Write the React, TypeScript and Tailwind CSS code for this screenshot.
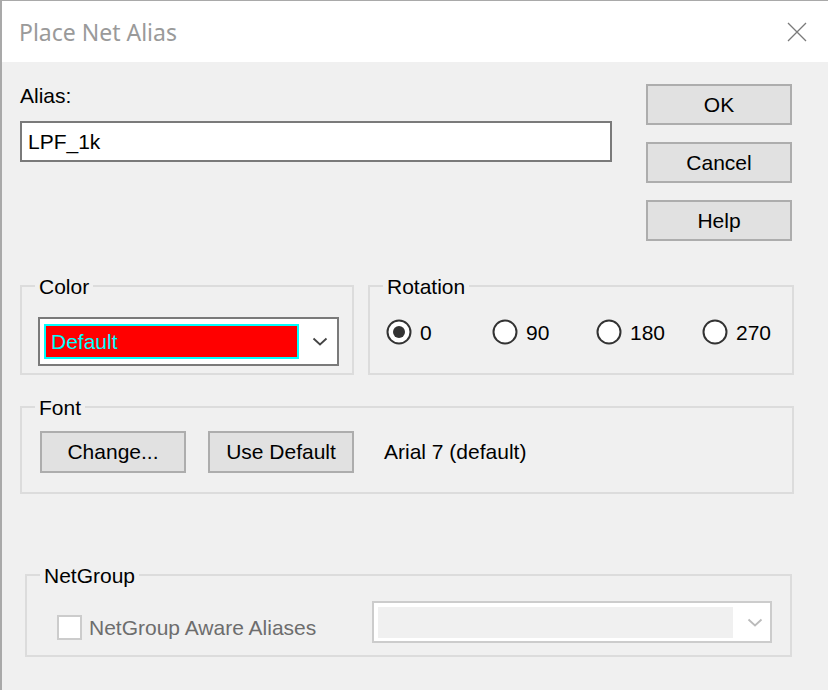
import React from 'react'

const Chevron = ({ color }: { color: string }) => (
  <svg width="16" height="9" viewBox="0 0 16 9" fill="none">
    <polyline points="1.5,1.5 8,7.5 14.5,1.5" stroke={color} strokeWidth="1.8" />
  </svg>
)

const Radio = ({ checked }: { checked?: boolean }) => (
  <svg width="26" height="26" viewBox="0 0 26 26">
    <circle cx="13" cy="13" r="11.5" fill="#fff" stroke="#333" strokeWidth="2" />
    {checked && <circle cx="13" cy="13" r="6" fill="#333" />}
  </svg>
)

const Group = ({ label, className, children }: { label: string; className: string; children: React.ReactNode }) => (
  <div className={`relative border-2 border-[#dcdcdc] ${className}`}>
    <span className="absolute left-[13px] -top-[12px] px-[4px] bg-[#f0f0f0] leading-[24px]">{label}</span>
    {children}
  </div>
)

const Btn = ({ children, className = '' }: { children: React.ReactNode; className?: string }) => (
  <div className={`w-[146px] border-2 border-[#adadad] bg-[#e1e1e1] flex items-center justify-center leading-[24px] ${className}`}>
    {children}
  </div>
)

export default function App() {
  const rotations = [
    { label: '0', w: 'w-[106px]', checked: true },
    { label: '90', w: 'w-[104px]' },
    { label: '180', w: 'w-[106px]' },
    { label: '270', w: '' },
  ]

  return (
    <div className="w-[828px] h-[690px] flex flex-col border-l-2 border-t border-[#a9a9a9] text-[21px] text-black font-['Liberation_Sans',Arial,sans-serif] overflow-hidden">
      {/* title bar */}
      <div className="h-[61px] bg-white flex items-center justify-between pl-[17px] pr-[21px] shrink-0">
        <span className="text-[23px] text-[#9a9a9a] font-['Noto_Sans',sans-serif] mt-[2px]">Place Net Alias</span>
        <svg width="20" height="20" viewBox="0 0 20 20">
          <path d="M1 1 L19 19 M19 1 L1 19" stroke="#7a7a7a" strokeWidth="1.3" />
        </svg>
      </div>

      <div className="flex-1 bg-[#f0f0f0] pl-[18px] pt-[22px]">
        {/* alias + buttons */}
        <div className="flex">
          <div className="w-[592px]">
            <div className="h-[24px] leading-[24px]">Alias:</div>
            <div className="mt-[13px] h-[41px] border-2 border-[#7a7a7a] bg-white pl-[6px] flex items-center leading-[24px]">LPF_1k</div>
          </div>
          <div className="ml-[34px] flex flex-col gap-[17px]">
            <Btn className="h-[41px]">OK</Btn>
            <Btn className="h-[41px]">Cancel</Btn>
            <Btn className="h-[41px]">Help</Btn>
          </div>
        </div>

        {/* color + rotation */}
        <div className="flex mt-[44px]">
          <Group label="Color" className="w-[334px] h-[90px] pl-[16px] pt-[30px]">
            <div className="w-[301px] h-[49px] border-2 border-[#7a7a7a] bg-white flex items-center pl-[4px]">
              <div className="w-[255px] h-[35px] border-2 border-[#00ffff] bg-[#ff0000] text-[#00ffff] pl-[5px] flex items-center leading-[24px]">Default</div>
              <div className="ml-[13px]"><Chevron color="#444" /></div>
            </div>
          </Group>
          <Group label="Rotation" className="ml-[14px] w-[426px] h-[90px] pl-[16px] pt-[32px]">
            <div className="flex">
              {rotations.map(r => (
                <div key={r.label} className={`flex items-center gap-[8px] ${r.w}`}>
                  <Radio checked={r.checked} />
                  <span className="leading-[24px] mt-[2px]">{r.label}</span>
                </div>
              ))}
            </div>
          </Group>
        </div>

        {/* font */}
        <Group label="Font" className="mt-[31px] w-[774px] h-[88px] pl-[18px] pt-[23px]">
          <div className="flex items-center">
            <Btn className="h-[42px]">Change...</Btn>
            <Btn className="h-[42px] ml-[22px]">Use Default</Btn>
            <span className="ml-[30px] leading-[24px]">Arial 7 (default)</span>
          </div>
        </Group>

        {/* netgroup */}
        <Group label="NetGroup" className="mt-[80px] ml-[5px] w-[767px] h-[83px] pl-[30px] pt-[25px]">
          <div className="flex items-start">
            <div className="w-[315px] flex items-center mt-[14px]">
              <div className="w-[25px] h-[25px] border-2 border-[#cccccc] bg-white" />
              <span className="ml-[7px] text-[#6d6d6d] leading-[24px]">NetGroup Aware Aliases</span>
            </div>
            <div className="w-[400px] h-[42px] border-2 border-[#cccccc] bg-white flex items-center pl-[4px]">
              <div className="w-[355px] h-[31px] bg-[#f0f0f0]" />
              <div className="ml-[14px]"><Chevron color="#bbbbbb" /></div>
            </div>
          </div>
        </Group>
      </div>
    </div>
  )
}
